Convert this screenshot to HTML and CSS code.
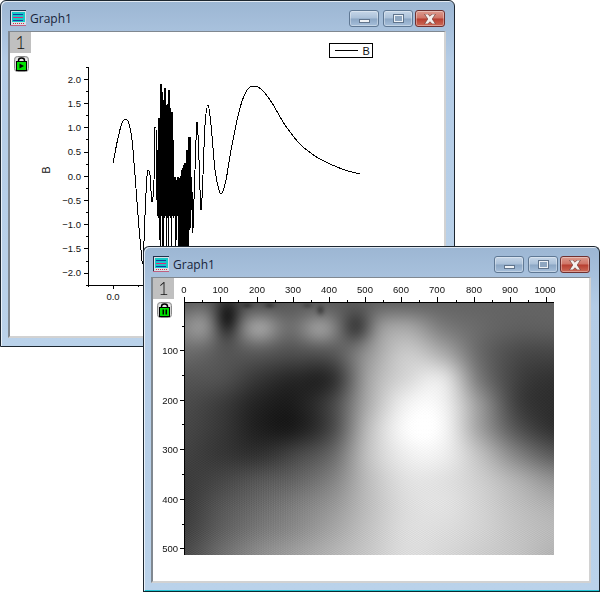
FILE: index.html
```html
<!DOCTYPE html>
<html lang="en">
<head>
  <meta charset="UTF-8">
  <title>Graph1</title>
  <link rel="stylesheet" href="styles.css">
</head>
<body>
  <div class="desktop">

    <div class="window window-line">
      <div class="titlebar">
        <svg class="app-icon" viewBox="0 0 16 16"><use href="#graph-icon"/></svg>
        <span class="title">Graph1</span>
        <div class="caption-buttons">
          <div class="caption-btn btn-min"><span class="glyph-min"></span></div>
          <div class="caption-btn btn-max"><span class="glyph-max"></span></div>
          <div class="caption-btn btn-close"><svg class="glyph-close" viewBox="0 0 12 9"><path d="M1 0h3l2 2 2-2h3L8 4.500 11 9H8L6 7 4 9H1l3-4.500z"/></svg></div>
        </div>
      </div>
      <div class="client">
        <svg class="plot" viewBox="10 32 434 304">
          <path class="axis" d="M88 67V285H143M84 79H88M84 103H88M84 127H88M84 152H88M84 176H88M84 200H88M84 224H88M84 248H88M84 273H88M86 67H88M86 91H88M86 115H88M86 139H88M86 164H88M86 188H88M86 212H88M86 236H88M86 261H88M86 285H88M88 285V287M113 285V289M138 285V287"/>
          <g class="tick-labels y-labels">
            <text x="81" y="82.500">2.0</text>
            <text x="81" y="107">1.5</text>
            <text x="81" y="131">1.0</text>
            <text x="81" y="155">0.5</text>
            <text x="81" y="179.500">0.0</text>
            <text x="81" y="204">−0.5</text>
            <text x="81" y="228">−1.0</text>
            <text x="81" y="252">−1.5</text>
            <text x="81" y="276">−2.0</text>
          </g>
          <text class="tick-labels x-label" x="113" y="300">0.0</text>
          <text class="tick-labels axis-title" transform="translate(50 170) rotate(-90)">B</text>
          <path id="line-curve" class="curve" d=""/>
          <rect class="legend-box" x="329.500" y="43.500" width="43" height="13.500"/>
          <path class="axis" d="M335 50H358"/>
          <text class="legend-text" x="362.500" y="54.500">B</text>
        </svg>
        <div class="layer-tab">1</div>
        <svg class="lock" viewBox="0 0 15 16"><use href="#lock-base"/><path d="M5.500 7.500v5l4.500-2.500z"/></svg>
      </div>
    </div>

    <div class="window window-heat">
      <div class="titlebar">
        <svg class="app-icon" viewBox="0 0 16 16"><use href="#graph-icon"/></svg>
        <span class="title">Graph1</span>
        <div class="caption-buttons">
          <div class="caption-btn btn-min"><span class="glyph-min"></span></div>
          <div class="caption-btn btn-max"><span class="glyph-max"></span></div>
          <div class="caption-btn btn-close"><svg class="glyph-close" viewBox="0 0 12 9"><path d="M1 0h3l2 2 2-2h3L8 4.500 11 9H8L6 7 4 9H1l3-4.500z"/></svg></div>
        </div>
      </div>
      <div class="client client-heat">
        <canvas id="heatmap" class="heatmap" width="370" height="253"></canvas>
        <svg class="plot" viewBox="153 278 436 303">
          <path class="axis" d="M184 302H554M184 302V555M184 297V302M220 297V302M257 297V302M293 297V302M329 297V302M365 297V302M401 297V302M437 297V302M474 297V302M510 297V302M546 297V302M202 300V302M238 300V302M275 300V302M311 300V302M347 300V302M383 300V302M419 300V302M456 300V302M492 300V302M528 300V302M180 350H184M180 400H184M180 449H184M180 499H184M180 548H184M182 326H184M182 375H184M182 424H184M182 474H184M182 524H184"/>
          <g class="tick-labels x-labels">
            <text x="184" y="293">0</text>
            <text x="220.500" y="293">100</text>
            <text x="257" y="293">200</text>
            <text x="293" y="293">300</text>
            <text x="329" y="293">400</text>
            <text x="365" y="293">500</text>
            <text x="401" y="293">600</text>
            <text x="437" y="293">700</text>
            <text x="474" y="293">800</text>
            <text x="510" y="293">900</text>
            <text x="545" y="293">1000</text>
          </g>
          <g class="tick-labels y-labels">
            <text x="178" y="354">100</text>
            <text x="178" y="403.500">200</text>
            <text x="178" y="453">300</text>
            <text x="178" y="502.500">400</text>
            <text x="178" y="551.500">500</text>
          </g>
        </svg>
        <div class="layer-tab">1</div>
        <svg class="lock" viewBox="0 0 15 16"><use href="#lock-base"/><path d="M5.500 7.500h1.500v5h-1.500zM8.500 7.500h1.500v5h-1.500z"/></svg>
      </div>
    </div>

  </div>

  <svg class="defs" width="0" height="0">
    <symbol id="graph-icon" viewBox="0 0 16 16">
      <rect x="0" y="0" width="16" height="16" fill="#20304a"/>
      <rect x="1" y="1" width="15" height="15" fill="#d8e0e8"/>
      <rect x="2" y="2" width="13" height="10" fill="#18c8c8"/>
      <path d="M3 4.500h10M3 10.500h10" stroke="#1838a0" fill="none"/>
      <path d="M3 7.500h10" stroke="#e02878" fill="none"/>
      <path d="M3 13.500h1M5 13.500h1M7 13.500h1M9 13.500h1M11 13.500h1M13 13.500h1" stroke="#d03040" fill="none"/>
      <rect x="0" y="15" width="16" height="1" fill="#c06080"/>
    </symbol>
    <symbol id="lock-base" viewBox="0 0 15 16">
      <rect x="0.500" y="0.500" width="14" height="15" rx="3" fill="#d4d4d4" stroke="#8a8a8a"/>
      <rect x="2" y="2" width="11" height="12" rx="1" fill="#e8e8e8"/>
      <path d="M4.500 6V4.500a3 2.500 0 0 1 6 0V6" fill="none" stroke="#000" stroke-width="1.500"/>
      <rect x="2.500" y="5.500" width="10" height="9" fill="#00e000" stroke="#000"/>
    </symbol>
  </svg>

  <script src="plot.js"></script>
</body>
</html>
```

FILE: styles.css
```css
html, body {
  margin: 0;
  padding: 0;
  background-color: white;
}
.desktop {
  position: relative;
  width: 600px;
  height: 592px;
  overflow: hidden;
}
.defs {
  position: absolute;
}
.window {
  position: absolute;
  box-sizing: border-box;
  display: flex;
  flex-direction: column;
  padding: 0 8px 8px 7px;
  border: 1px solid #1c2630;
  border-radius: 6px 6px 0 0;
  background: linear-gradient(to bottom, #9cb6d3 0, #b4cce6 60px, #bad2ea 100%);
  box-shadow: inset 1px 1px 0 rgba(255, 255, 255, 0.7);
}
.window-line {
  left: 0;
  top: 0;
  width: 455px;
  height: 347px;
}
.window-heat {
  left: 143px;
  top: 246px;
  width: 457px;
  height: 346px;
  border-bottom-color: #0a2a30;
  box-shadow: inset 1px 1px 0 rgba(255, 255, 255, 0.7), inset 0 -1px 0 #22c4d4;
}
.titlebar {
  display: flex;
  align-items: flex-start;
  height: 30px;
  flex: none;
}
.app-icon {
  width: 16px;
  height: 16px;
  margin: 9px 0 0 2px;
}
.title {
  margin: 9px 0 0 4px;
  font-family: "Open Sans", sans-serif;
  font-size: 12px;
  line-height: 17px;
  color: #18243a;
}
.caption-buttons {
  display: flex;
  margin: 9px 1px 0 auto;
}
.caption-btn {
  box-sizing: border-box;
  width: 30px;
  height: 17px;
  display: flex;
  align-items: center;
  justify-content: center;
  border: 1px solid #5f7894;
  border-radius: 3px;
  background: linear-gradient(to bottom, #c6d6e8 0, #aac0d8 48%, #8ba6c4 52%, #a6bfda 100%);
  box-shadow: inset 0 0 0 1px rgba(255, 255, 255, 0.35);
}
.btn-min {
  margin-right: 4px;
}
.btn-max {
  margin-right: 2px;
}
.btn-close {
  border-color: #6e3030;
  background: linear-gradient(to bottom, #dc9a8e 0, #cf7466 48%, #b73e30 52%, #cc6a58 100%);
}
.glyph-min {
  width: 11px;
  height: 4px;
  margin-top: 4px;
  box-sizing: border-box;
  background-color: #eef2f6;
  border: 1px solid #60748c;
}
.glyph-max {
  width: 11px;
  height: 9px;
  box-sizing: border-box;
  background-color: #8ea6c0;
  border: 2px solid #eef2f6;
  outline: 1px solid #60748c;
  outline-offset: -1px;
}
.glyph-close {
  width: 14px;
  height: 10px;
  fill: #f4f0ee;
  stroke: #6e3a34;
  stroke-width: 0.6;
}
.client {
  position: relative;
  flex: 1;
  box-sizing: border-box;
  background-color: white;
  border-style: solid;
  border-width: 1px 2px 2px 2px;
  border-color: #808890 #d2d2d2 #d2d2d2 #808890;
}
.client-heat {
  padding: 24px 0 0 31px;
}
.heatmap {
  display: block;
}
.plot {
  position: absolute;
  left: 0;
  top: 0;
  width: 100%;
  height: 100%;
}
.axis {
  fill: none;
  stroke: black;
  stroke-width: 1;
  shape-rendering: crispEdges;
}
.curve {
  fill: none;
  stroke: black;
  stroke-width: 1;
  shape-rendering: crispEdges;
}
.legend-box {
  fill: white;
  stroke: black;
  stroke-width: 1;
  shape-rendering: crispEdges;
}
.legend-text {
  font-family: "Liberation Sans", sans-serif;
  font-size: 11px;
  fill: #111;
}
.tick-labels {
  font-family: "Liberation Sans", sans-serif;
  font-size: 9.500px;
  fill: #111;
}
.y-labels text {
  text-anchor: end;
}
.x-labels text,
.x-label,
.axis-title {
  text-anchor: middle;
}
.axis-title {
  font-size: 10.500px;
}
.layer-tab {
  position: absolute;
  left: 0;
  top: 0;
  width: 21px;
  height: 21px;
  background-color: #c0c0c0;
  color: #111;
  font-family: Lato, sans-serif;
  font-size: 18px;
  font-weight: 300;
  line-height: 21px;
  text-align: center;
}
.lock {
  position: absolute;
  left: 4px;
  top: 24px;
  width: 15px;
  height: 16px;
}
```

FILE: plot.js
```js
// Line plot: smooth parts are control points, the noisy middle is generated
function smoothPath(points) {
  let d = '';
  for (let i = 0; i < points.length - 1; i++) {
    const p0 = points[Math.max(i - 1, 0)];
    const p1 = points[i];
    const p2 = points[i + 1];
    const p3 = points[Math.min(i + 2, points.length - 1)];
    if (i === 0) d += `M${p1[0]} ${p1[1]}`;
    const c1x = p1[0] + (p2[0] - p0[0]) / 6;
    const c1y = p1[1] + (p2[1] - p0[1]) / 6;
    const c2x = p2[0] - (p3[0] - p1[0]) / 6;
    const c2y = p2[1] - (p3[1] - p1[1]) / 6;
    d += `C${c1x} ${c1y} ${c2x} ${c2y} ${p2[0]} ${p2[1]}`;
  }
  return d;
}

// each spike: x, top, bottom
function noisyPart() {
  const spikes = [
    [156, 127, 200], [157, 178, 216], [158, 150, 218], [159, 118, 240], [160, 176, 262],
    [161, 84, 216], [162, 92, 262], [163, 150, 216], [163, 100, 262], [164, 150, 218],
    [165, 88, 216], [166, 105, 262], [167, 160, 216], [167, 104, 218], [168, 130, 262],
    [169, 90, 216], [170, 108, 218], [171, 150, 262], [172, 112, 216], [173, 140, 218],
    [174, 177, 216], [175, 177, 262], [176, 177, 240], [178, 177, 262], [179, 178, 262],
    [180, 178, 262], [181, 176, 262], [182, 170, 262], [183, 168, 262], [184, 165, 262],
    [185, 163, 262], [186, 163, 262], [187, 150, 262], [188, 162, 250], [189, 137, 230],
    [190, 137, 228], [191, 175, 210], [192, 190, 228]
  ];
  return spikes.map(s => `L${s[0]} ${s[1]}L${s[0] + 0.4} ${s[2]}`).join('');
}

const before = [[113, 163], [118, 138], [122, 123], [126, 119], [129, 124], [132, 140], [135, 175], [138, 215], [141, 250], [143, 262], [145, 215], [147, 176], [148.500, 171], [150, 175], [152, 202], [154, 180], [155, 127]];
const after = [[192, 228], [193, 228], [195, 170], [197, 122], [199, 160], [201, 210], [203, 175], [205, 125], [208, 105], [211, 125], [215, 170], [219, 190], [222, 193], [226, 180], [232, 145], [240, 108], [247, 90], [254, 86], [262, 90], [272, 103], [285, 125], [300, 144], [315, 156], [330, 164], [345, 170], [360, 174]];

const curve = document.getElementById('line-curve');
curve.setAttribute('d', smoothPath(before) + noisyPart() + 'L192 228' + smoothPath(after).replace('M', 'L'));

// Heat map: gray values read off on a 37 x 25 px grid
const heatGrid = [
  [ 92,  85,  80,  90,  92, 100, 100, 100, 100, 100, 100],
  [125, 105, 105, 100, 105, 150, 165, 125, 105,  95,  95],
  [105,  90,  85,  78,  85, 155, 200, 170, 105,  75,  70],
  [ 85,  80,  55,  40,  50, 165, 215, 225, 120,  65,  50],
  [ 75,  60,  35,  30,  70, 175, 240, 240, 150,  65,  45],
  [ 70,  55,  32,  30,  75, 190, 250, 245, 160,  85,  50],
  [ 65,  55,  50,  70, 105, 195, 238, 238, 190, 130,  90],
  [ 60,  70,  85, 100, 130, 190, 225, 225, 205, 175, 145],
  [ 60,  85, 105, 125, 150, 190, 220, 225, 210, 190, 175],
  [ 65,  95, 120, 140, 165, 195, 220, 220, 210, 195, 185],
  [ 75, 110, 140, 160, 180, 200, 220, 215, 205, 195, 180]
];

// x, y, spread x, spread y, strength
const heatBlobs = [
  [43, 17, 13, 20, -70],
  [17, 22, 15, 20, 30],
  [75, 26, 20, 16, 50],
  [135, 27, 20, 16, 50],
  [173, 25, 17, 17, -70],
  [63, 3, 5, 3, -25],
  [85, 3, 5, 3, -25],
  [123, 3, 5, 3, -20],
  [136, 8, 4, 5, -35]
];

function cubic(a, b, c, d, t) {
  return b + 0.5 * t * (c - a + t * (2 * a - 5 * b + 4 * c - d + t * (3 * (b - c) + d - a)));
}

function gridValue(x, y) {
  const gx = Math.min(x / 37, 9.999);
  const gy = Math.min(y / 25.300, 9.999);
  const ix = Math.floor(gx);
  const iy = Math.floor(gy);
  const rows = [];
  for (let j = -1; j <= 2; j++) {
    const row = heatGrid[Math.max(0, Math.min(10, iy + j))];
    const cell = i => row[Math.max(0, Math.min(10, ix + i))];
    rows.push(cubic(cell(-1), cell(0), cell(1), cell(2), gx - ix));
  }
  return cubic(rows[0], rows[1], rows[2], rows[3], gy - iy);
}

function drawHeatmap() {
  const canvas = document.getElementById('heatmap');
  const ctx = canvas.getContext('2d');
  const image = ctx.createImageData(canvas.width, canvas.height);
  for (let y = 0; y < canvas.height; y++) {
    for (let x = 0; x < canvas.width; x++) {
      let v = gridValue(x, y);
      heatBlobs.forEach(b => {
        const dx = (x - b[0]) / b[2];
        const dy = (y - b[1]) / b[3];
        v += b[4] * Math.exp(-(dx * dx + dy * dy));
      });
      // moire ripple, stronger towards the bottom
      const ripple = Math.sin(x * 1.9) * Math.cos(y * (1.4 + y * 0.004));
      v += ripple * (1 + (y / 253) * 5);
      // vertical streaks under the dark patch
      const sx = (x - 85) / 45;
      const sy = (y - 200) / 50;
      v += Math.sin(x * 2.6) * 4 * Math.exp(-(sx * sx + sy * sy));
      const i = (y * canvas.width + x) * 4;
      image.data[i] = image.data[i + 1] = image.data[i + 2] = v;
      image.data[i + 3] = 255;
    }
  }
  ctx.putImageData(image, 0, 0);
}

drawHeatmap();
```
